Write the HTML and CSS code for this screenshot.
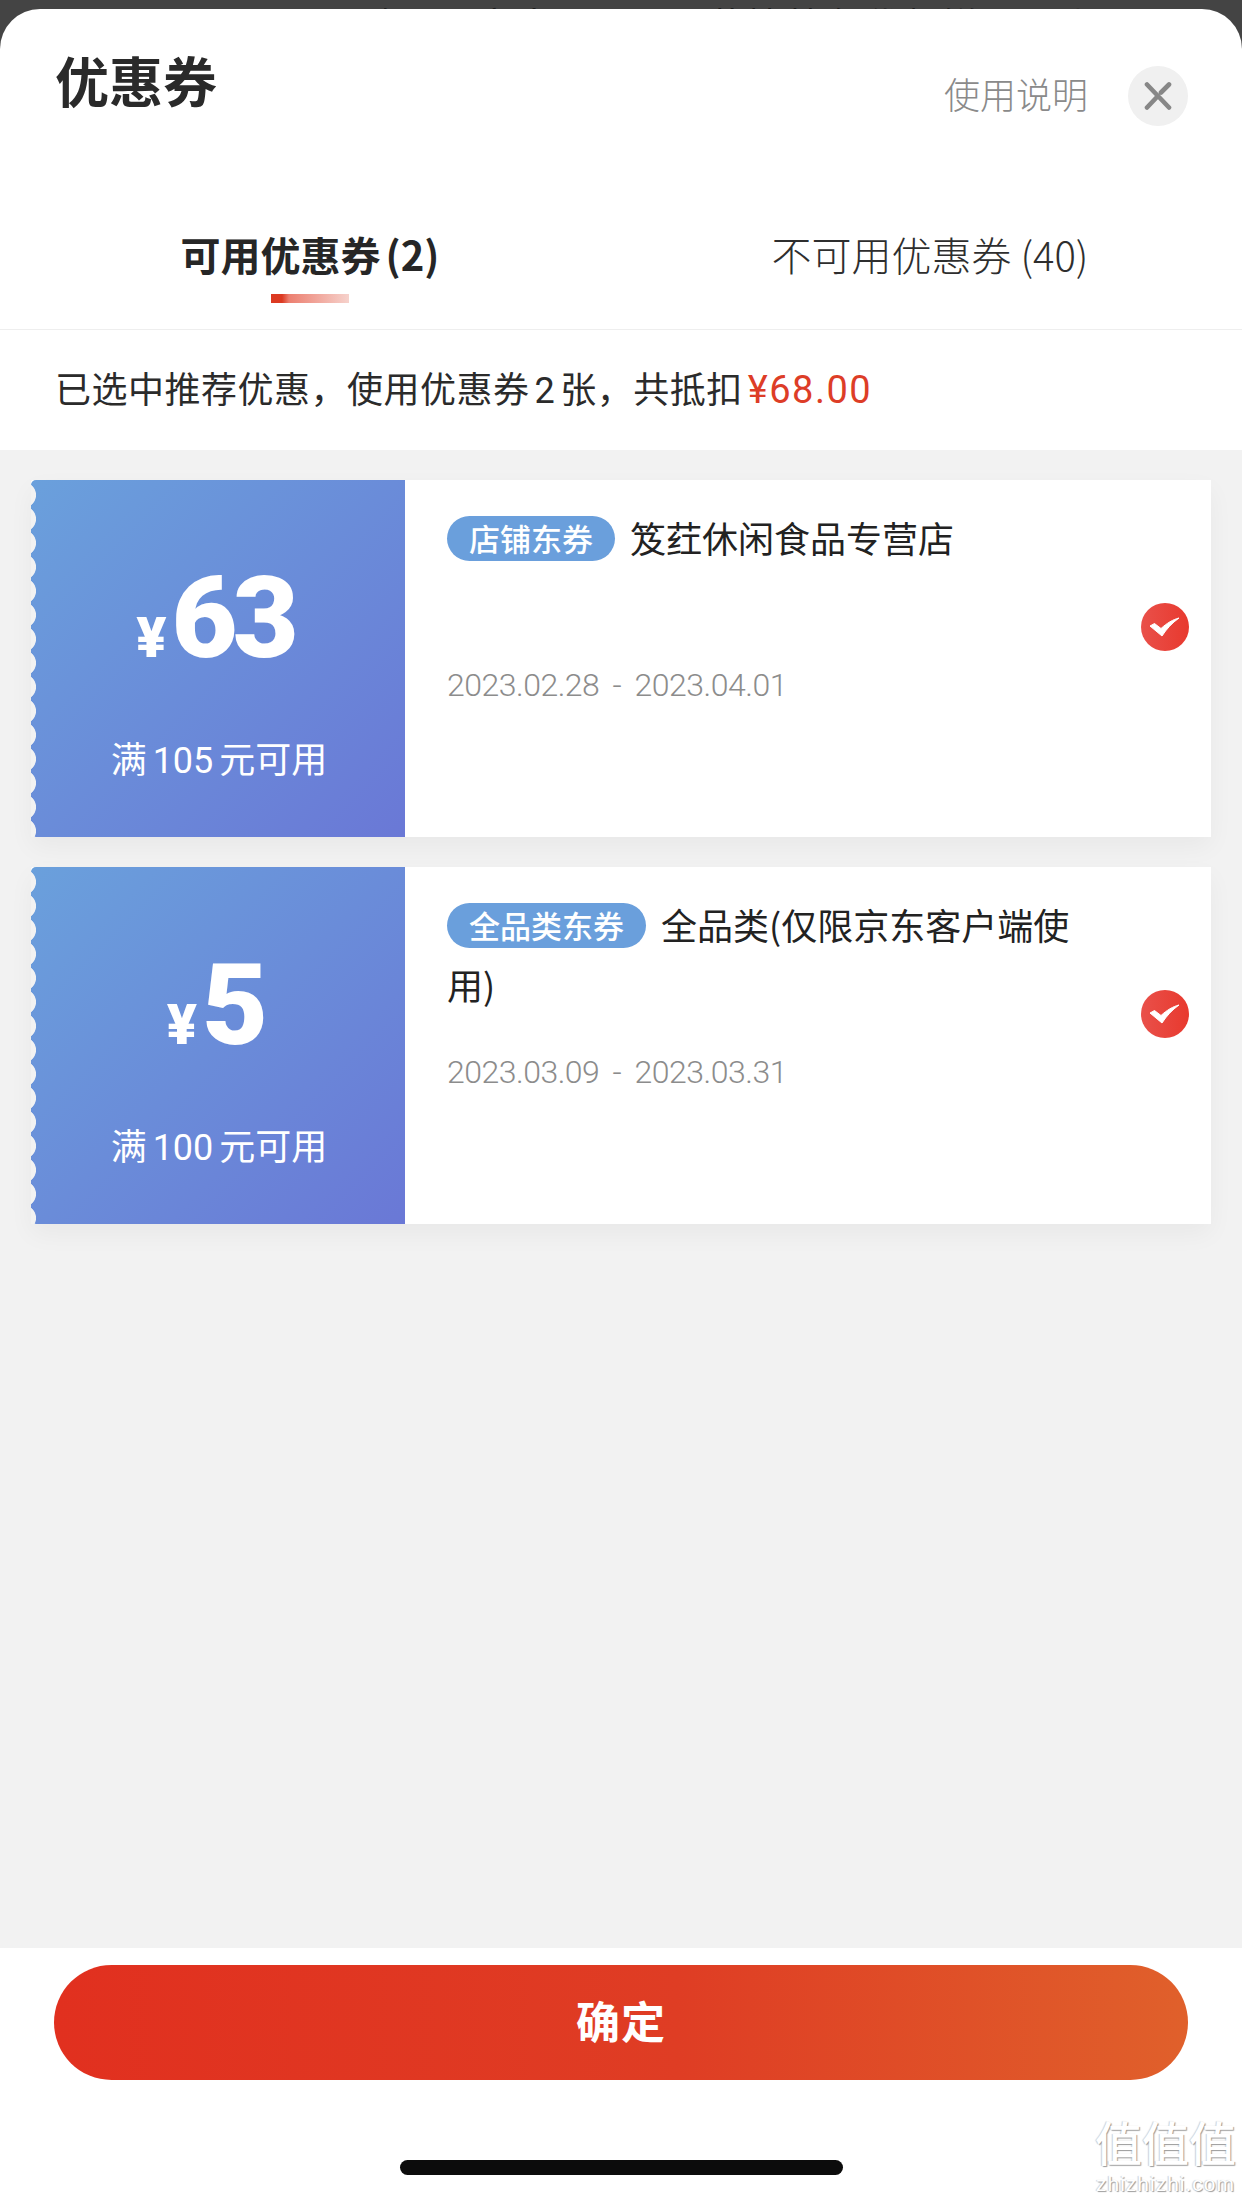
FILE: index.html
```html
<!DOCTYPE html>
<html lang="zh-CN">
<head>
<meta charset="utf-8">
<title>优惠券</title>
<link rel="stylesheet" href="styles.css">
</head>
<body>
<div class="page">
  <div class="backdrop"><span class="backdrop-text">随用可享十 2023 元莲情特色代餐饼干两张</span></div>
  <main class="sheet">
    <header class="head">
      <h1 class="title">优惠券</h1>
      <div class="actions">
        <span class="help">使用说明</span>
        <button class="close" aria-label="关闭">
          <svg width="28" height="30" viewBox="0 0 28 30"><path d="M3 3.5 25 26.5M3 26.5 12.5 16.5M17 11.5 25 3.5" fill="none" stroke="#878787" stroke-width="4.600" stroke-linecap="round"/></svg>
        </button>
      </div>
    </header>

    <nav class="tabs">
      <div class="tab tab-on"><span class="tab-label">可用优惠券 (2)</span><i class="tab-bar"></i></div>
      <div class="tab"><span class="tab-label">不可用优惠券 (40)</span></div>
    </nav>

    <p class="summary">已选中推荐优惠，使用优惠券<span class="num">2</span>张，共抵扣<span class="sum">¥68.00</span></p>

    <section class="list">
      <article class="card">
        <div class="stub">
          <div class="price"><span class="cur">¥</span><span class="amount">63</span></div>
          <div class="rule">满<span class="num">105</span>元可用</div>
        </div>
        <div class="body">
          <div class="name"><span class="badge">店铺东券</span>笈荭休闲食品专营店</div>
          <div class="date">2023.02.28 - 2023.04.01</div>
        </div>
        <svg class="check" width="48" height="48" viewBox="0 0 48 48"><defs><linearGradient id="tick1" x1="0" x2="1"><stop offset="0" stop-color="#e9504a"/><stop offset="1" stop-color="#e8392e"/></linearGradient></defs><circle cx="24" cy="24" r="24" fill="url(#tick1)"/><path d="M9 23 13.500 20.500 20 25.500C26 20 32 16.500 38 15 31 20 25.500 26 21 33Z" fill="#fff" stroke="#fff" stroke-width="1" stroke-linejoin="round"/></svg>
      </article>

      <article class="card">
        <div class="stub">
          <div class="price"><span class="cur">¥</span><span class="amount">5</span></div>
          <div class="rule">满<span class="num">100</span>元可用</div>
        </div>
        <div class="body">
          <div class="name"><span class="badge">全品类东券</span>全品类(仅限京东客户端使用)</div>
          <div class="date">2023.03.09 - 2023.03.31</div>
        </div>
        <svg class="check" width="48" height="48" viewBox="0 0 48 48"><defs><linearGradient id="tick2" x1="0" x2="1"><stop offset="0" stop-color="#e9504a"/><stop offset="1" stop-color="#e8392e"/></linearGradient></defs><circle cx="24" cy="24" r="24" fill="url(#tick2)"/><path d="M9 23 13.500 20.500 20 25.500C26 20 32 16.500 38 15 31 20 25.500 26 21 33Z" fill="#fff" stroke="#fff" stroke-width="1" stroke-linejoin="round"/></svg>
      </article>
    </section>

    <footer class="foot">
      <button class="confirm">确定</button>
      <div class="home-bar"></div>
    </footer>
  </main>
  <div class="mark"><span class="mark-zh">值值值</span><span class="mark-en">zhizhizhi.com</span></div>
</div>
</body>
</html>
```

FILE: styles.css
```css
* { box-sizing: border-box; }

html, body {
  margin: 0;
  padding: 0;
}

body {
  background: #444;
  font-family: "Noto Sans CJK SC", "Noto Sans", sans-serif;
  color: #262626;
}

.page {
  position: relative;
  display: flex;
  flex-direction: column;
  width: 1242px;
  height: 2199px;
  overflow: hidden;
}

/* sliver of the page behind the bottom sheet */
.backdrop {
  flex: none;
  height: 9px;
  padding: 5px 0 0 360px;
  overflow: hidden;
}

.backdrop-text {
  display: block;
  font-size: 36px;
  line-height: 36px;
  color: #1d1d1d;
  white-space: nowrap;
  letter-spacing: 3px;
}

.sheet {
  flex: 1;
  display: flex;
  flex-direction: column;
  min-height: 0;
  background: #fff;
  border-radius: 40px 40px 0 0;
  overflow: hidden;
}

/* header */
.head {
  flex: none;
  display: flex;
  justify-content: space-between;
  align-items: flex-start;
  height: 191px;
  padding: 43px 54px 0 55px;
}

.title {
  margin: 0;
  font-size: 54px;
  line-height: 56px;
  font-weight: 700;
  color: #2a2a2a;
}

.actions {
  display: flex;
  align-items: center;
  gap: 40px;
  margin-top: 14px;
  height: 60px;
}

.help {
  margin-bottom: 6px;
  font-size: 36px;
  line-height: 54px;
  font-weight: 300;
  color: #8a8a8a;
}

.close {
  display: flex;
  align-items: center;
  justify-content: center;
  width: 60px;
  height: 60px;
  padding: 0;
  border: 0;
  border-radius: 50%;
  background: #f0f0f0;
}

/* tabs */
.tabs {
  flex: none;
  display: grid;
  grid-template-columns: 1fr 1fr;
  height: 130px;
  padding: 26px 2px 0 0;
  border-bottom: 1px solid #eeeeee;
}

.tab {
  display: flex;
  flex-direction: column;
  align-items: center;
}

.tab-label {
  font-size: 40px;
  line-height: 56px;
  font-weight: 300;
  color: #2e2e2e;
  white-space: nowrap;
}

.tab-on .tab-label {
  font-weight: 700;
  color: #262626;
  word-spacing: -4px;
}

.tab-bar {
  display: block;
  width: 78px;
  height: 9px;
  margin-top: 12px;
  background: linear-gradient(90deg, #dc3a22 0, #dc3a22 11px, #ec7f70 18px, #f6d2cc 100%);
}

/* selection summary */
.summary {
  flex: none;
  height: 120px;
  margin: 0;
  padding-left: 55px;
  font-size: 36px;
  line-height: 114px;
  letter-spacing: .5px;
  font-weight: 400;
  color: #2b2b2b;
  white-space: nowrap;
}

.num {
  font-family: Roboto, sans-serif;
  margin: 0 5px;
}

.sum {
  margin-left: 5px;
  font-family: Roboto, sans-serif;
  font-size: 38px;
  letter-spacing: 1.500px;
  color: #dd3d27;
}

/* coupon list */
.list {
  flex: 1;
  display: flex;
  flex-direction: column;
  gap: 30px;
  padding: 30px 31px 0 31px;
  background: #f2f2f2;
}

.card {
  display: flex;
  align-items: flex-start;
  height: 357px;
  background: #fff;
  box-shadow: 0 10px 24px rgba(0, 0, 0, .045);
}

.stub {
  position: relative;
  flex: none;
  display: flex;
  flex-direction: column;
  align-items: center;
  width: 374px;
  height: 100%;
  padding-top: 80px;
  color: #fff;
  background: linear-gradient(135deg, #6aa0dc 0%, #6a78d6 100%);
  border-radius: 5px 0 0 5px;
}

/* scalloped tear line down the left edge */
.stub::before {
  content: "";
  position: absolute;
  left: 0;
  top: 0;
  bottom: 0;
  width: 5px;
  background-image: radial-gradient(circle at -8px 12px, #f2f2f2 12.600px, transparent 13.400px);
  background-size: 5px 24px;
  background-position: 0 3px;
  background-repeat: repeat-y;
}

.price {
  display: flex;
  align-items: baseline;
  height: 116px;
  line-height: 116px;
  padding-right: 6px;
}

.cur {
  margin-right: 5px;
  font-family: Roboto, sans-serif;
  font-size: 56px;
  font-weight: 900;
}

.amount {
  font-family: Roboto, sans-serif;
  font-size: 114px;
  font-weight: 900;
  letter-spacing: -5px;
}

.rule {
  margin-top: 53px;
  margin-left: 2px;
  font-size: 36px;
  line-height: 56px;
  font-weight: 400;
  white-space: nowrap;
}

.rule .num {
  margin: 0 6px;
}

.body {
  flex: 1;
  min-width: 0;
  padding: 27px 0 0 42px;
}

.name {
  min-height: 120px;
  font-size: 36px;
  line-height: 60px;
  font-weight: 400;
  color: #222;
}

.badge {
  display: inline-block;
  height: 45px;
  margin-right: 15px;
  padding: 0 22px;
  border-radius: 23px;
  font-size: 31px;
  line-height: 43px;
  font-weight: 500;
  color: #fff;
  background: #6a9fdc;
  vertical-align: 2px;
}

.date {
  margin-top: 38px;
  font-family: Roboto, sans-serif;
  font-size: 32px;
  line-height: 40px;
  font-weight: 300;
  letter-spacing: -.5px;
  word-spacing: 6px;
  color: #8c8c8c;
  white-space: nowrap;
}

.check {
  flex: none;
  margin: 123px 22px 0 46px;
}

/* bottom action area */
.foot {
  flex: none;
  display: flex;
  flex-direction: column;
  align-items: center;
  height: 251px;
  padding-top: 17px;
  background: #fff;
}

.confirm {
  width: 1134px;
  height: 115px;
  padding: 0 0 6px;
  border: 0;
  border-radius: 58px;
  font-family: inherit;
  font-size: 44px;
  font-weight: 700;
  letter-spacing: 1px;
  color: #fff;
  background: linear-gradient(90deg, #e1301f 0%, #df3d24 55%, #e0602b 100%);
}

.home-bar {
  width: 443px;
  height: 15px;
  margin-top: 80px;
  border-radius: 8px;
  background: #0c0c0c;
}

/* corner watermark laid over the sheet */
.mark {
  position: absolute;
  right: 6px;
  bottom: 2px;
  display: flex;
  flex-direction: column;
  align-items: center;
  color: #fff;
  text-shadow: 1px 1px 1px #9a9a9a, -1px 0 1px #cfcfcf;
}

.mark-zh {
  font-size: 47px;
  line-height: 60px;
  font-weight: 500;
  white-space: nowrap;
}

.mark-en {
  font-family: "Liberation Sans", sans-serif;
  font-size: 21px;
  line-height: 26px;
  letter-spacing: 1px;
  white-space: nowrap;
}
```
